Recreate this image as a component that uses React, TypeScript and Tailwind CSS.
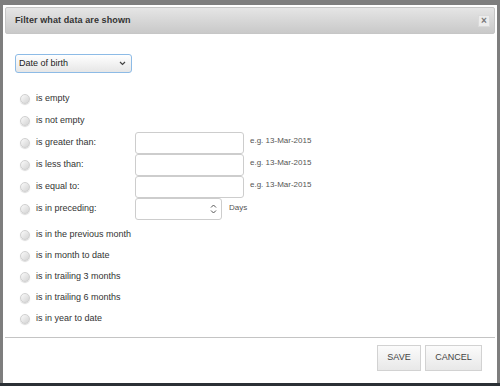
const rows: { label: string; kind?: 'date' | 'days' }[] = [
  { label: 'is empty' },
  { label: 'is not empty' },
  { label: 'is greater than:', kind: 'date' },
  { label: 'is less than:', kind: 'date' },
  { label: 'is equal to:', kind: 'date' },
  { label: 'is in preceding:', kind: 'days' },
]

const periods = [
  'is in the previous month',
  'is in month to date',
  'is in trailing 3 months',
  'is in trailing 6 months',
  'is in year to date',
]

export default function App() {
  return (
    <div className="w-[500px] h-[386px] flex flex-col bg-[#7e7e7e] font-['Liberation_Sans',Arial,sans-serif] overflow-hidden">
      <div className="flex-1 pl-[3px] pt-[5px]">
        {/* Dialog */}
        <div className="w-[494px] h-[378px] bg-white p-[2px] flex flex-col">
          <div className="h-[27px] flex items-center justify-between pl-[9px] pr-[4px] border border-[#c6c6c6] rounded-[2px] bg-gradient-to-b from-[#e5e5e5] to-[#c9c9c9]">
            <span className="text-[9px] font-bold text-[#333] tracking-[0.1px]">Filter what data are shown</span>
            <button className="w-[12px] h-[12px] flex items-center justify-center bg-[#ececec] border border-[#dadada] text-[#777] text-[10px] leading-none font-bold">
              ×
            </button>
          </div>

          <div className="pl-[10px] pt-[20px]">
            <div className="w-[117px] h-[19px] flex items-center justify-between pl-[3px] pr-[5px] border border-[#8dbbe6] rounded-[3px] bg-gradient-to-b from-[#ffffff] to-[#e6e6e6] text-[9px] text-[#222]">
              <span>Date of birth</span>
              <svg width="7" height="5" viewBox="0 0 7 5" fill="none" stroke="#444" strokeWidth="1.2">
                <path d="M1 1l2.5 2.5L6 1" />
              </svg>
            </div>

            <div className="mt-[15px] pl-[5px] flex flex-col">
              {rows.map((r) => (
                <div key={r.label} className="h-[22px] flex items-center">
                  <div className="w-[115px] flex items-center">
                    <Radio />
                    <span className="ml-[6px] text-[9px] text-[#333]">{r.label}</span>
                  </div>
                  {r.kind === 'date' && (
                    <>
                      <div className="w-[109px] h-[22px] border border-[#cdcdcd] rounded-[3px] bg-white" />
                      <span className="ml-[6px] self-start pt-[3px] text-[8px] text-[#555]">e.g. 13-Mar-2015</span>
                    </>
                  )}
                  {r.kind === 'days' && (
                    <>
                      <div className="w-[87px] h-[22px] border border-[#cdcdcd] rounded-[3px] bg-white flex items-center justify-end pr-[4px]">
                        <svg width="7" height="12" viewBox="0 0 7 12" fill="none" stroke="#555" strokeWidth="1">
                          <path d="M1 4.5l2.5-2.5L6 4.5M1 7.5l2.5 2.5L6 7.5" />
                        </svg>
                      </div>
                      <span className="ml-[7px] self-start pt-[4px] text-[8px] text-[#555]">Days</span>
                    </>
                  )}
                </div>
              ))}
              <div className="mt-[4px] flex flex-col">
                {periods.map((p) => (
                  <div key={p} className="h-[21px] flex items-center">
                    <Radio />
                    <span className="ml-[6px] text-[9px] text-[#333]">{p}</span>
                  </div>
                ))}
              </div>
            </div>
          </div>

          {/* Footer */}
          <div className="mt-auto h-[44px] border-t border-[#c4c4c4] pt-[7px] pr-[13px] flex justify-end gap-[4px]">
            <button className="w-[44px] h-[26px] border border-[#d2d2d2] bg-gradient-to-b from-[#fbfbfb] to-[#e8e8e8] text-[9px] text-[#444]">
              SAVE
            </button>
            <button className="w-[57px] h-[26px] border border-[#d2d2d2] bg-gradient-to-b from-[#fbfbfb] to-[#e8e8e8] text-[9px] text-[#444]">
              CANCEL
            </button>
          </div>
        </div>
      </div>
      <div className="h-[3px] bg-[#2b3035]" />
    </div>
  )
}

function Radio() {
  return (
    <span className="w-[10px] h-[10px] rounded-full border border-[#d0d0d0] bg-gradient-to-br from-[#fafafa] to-[#d4d4d4] shadow-[0_1px_1px_rgba(0,0,0,0.15)]" />
  )
}
